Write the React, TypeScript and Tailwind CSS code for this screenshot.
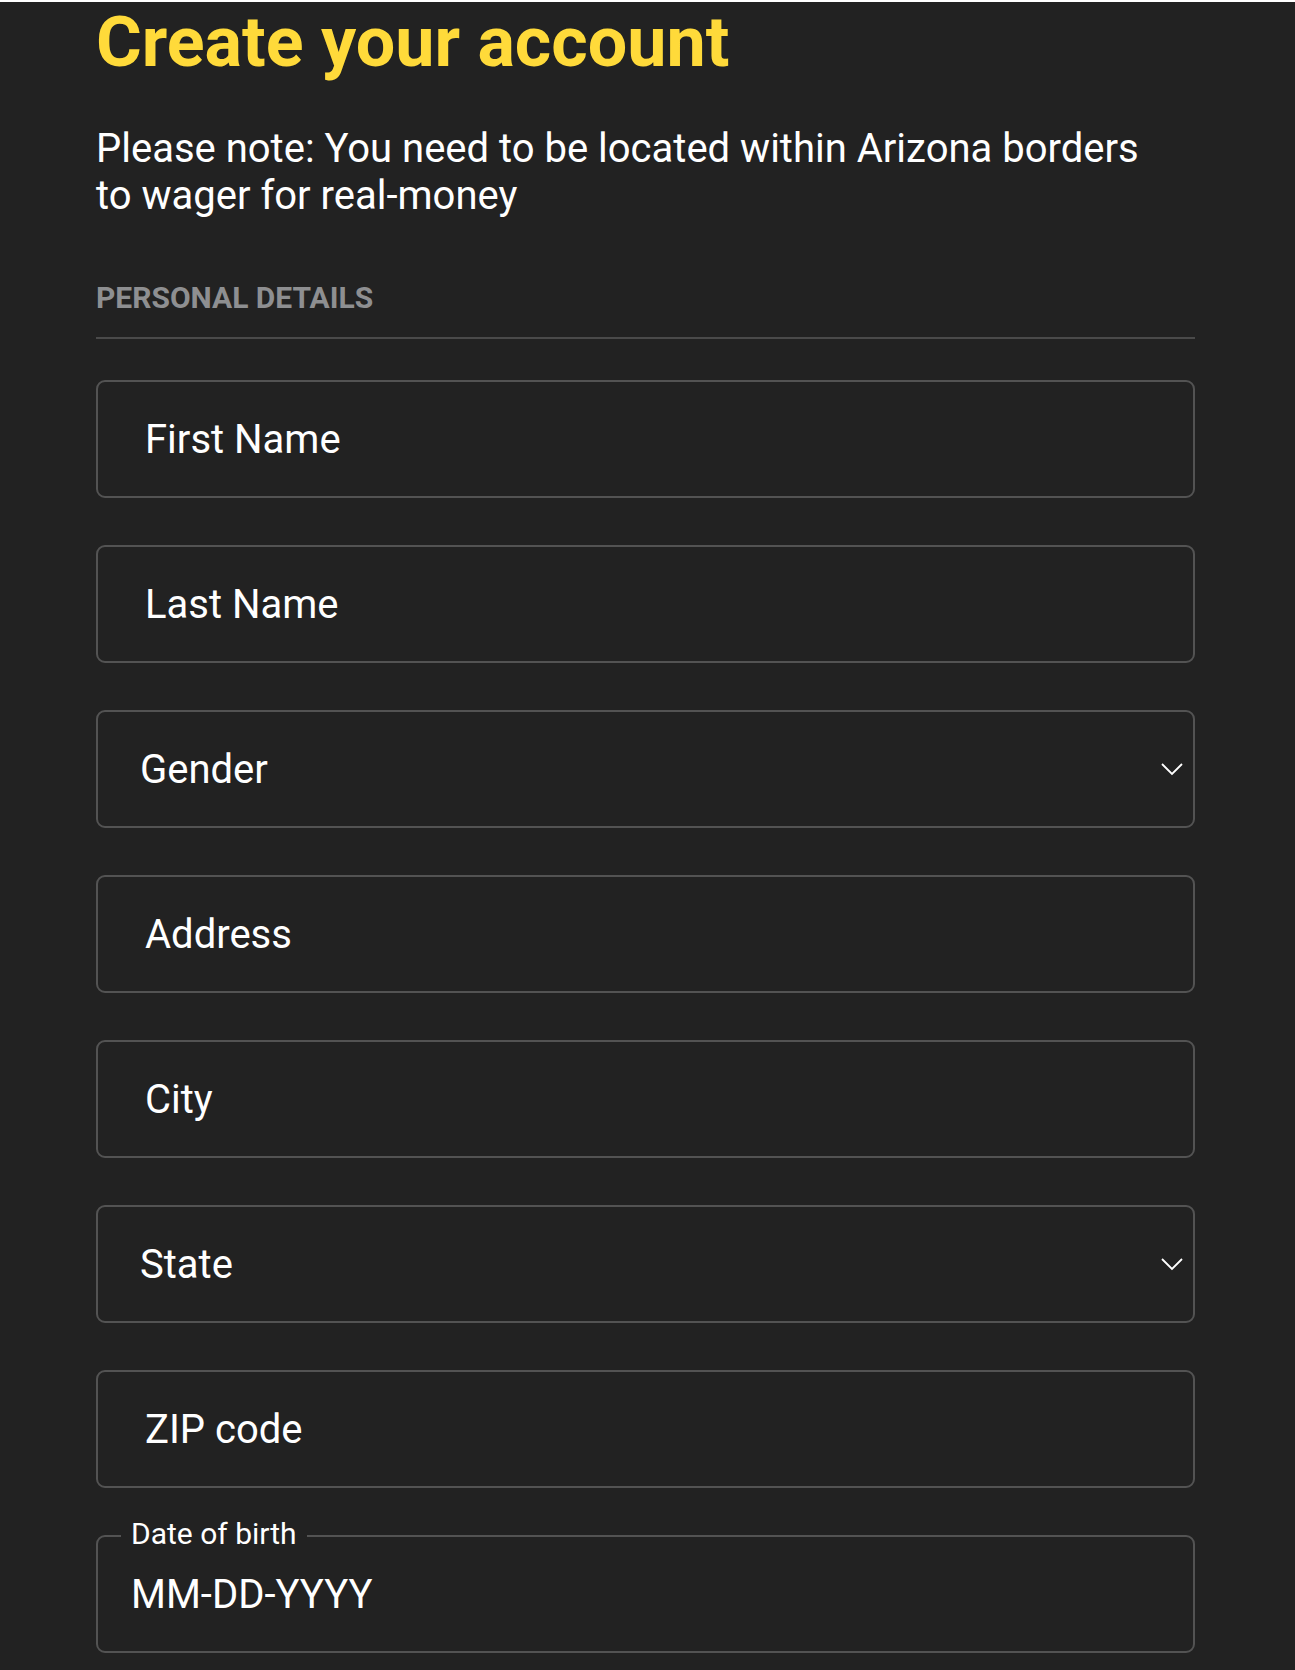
import React from "react";

function Field({ label }: { label: string }) {
  return (
    <div className="flex h-[118px] items-center rounded-[9px] border-2 border-[#535353] pl-[47px]">
      <span className="text-[40px] leading-[47px] text-white">{label}</span>
    </div>
  );
}

function SelectField({ label }: { label: string }) {
  return (
    <div className="flex h-[118px] items-center justify-between rounded-[9px] border-2 border-[#535353] pl-[42px] pr-[10px]">
      <span className="text-[40px] leading-[47px] text-white">{label}</span>
      <svg width="22" height="13" viewBox="0 0 22 13" fill="none">
        <polyline points="1,1 11,11 21,1" stroke="#ffffff" strokeWidth="1.8" fill="none" />
      </svg>
    </div>
  );
}

export default function App() {
  return (
    <div
      className="min-h-[1670px] w-full bg-[#222222] pb-[20px]"
      style={{ fontFamily: "Roboto, 'Liberation Sans', sans-serif" }}
    >
      <div className="ml-[96px] w-[1099px]">
        <h1 className="mt-[2px] text-[70px] font-bold leading-[80px] text-[#ffda3a]">
          Create your account
        </h1>
        <p className="mt-[43px] w-[1060px] text-[40px] leading-[47px] text-white">
          Please note: You need to be located within Arizona borders to wager for real-money
        </p>
        <div className="mt-[61px] text-[30px] font-bold uppercase leading-[35px] text-[#8e8f91]">
          Personal details
        </div>
        <div className="mt-[22px] h-[2px] bg-[#4a4a4a]" />
        <div className="mt-[41px] flex flex-col gap-[47px]">
          <Field label="First Name" />
          <Field label="Last Name" />
          <SelectField label="Gender" />
          <Field label="Address" />
          <Field label="City" />
          <SelectField label="State" />
          <Field label="ZIP code" />
          <div className="relative flex h-[118px] items-center rounded-[9px] border-2 border-[#535353] pl-[33px]">
            <span className="absolute left-[23px] top-[-21px] bg-[#222222] px-[10px] text-[30px] leading-[35px] text-white">
              Date of birth
            </span>
            <span className="text-[40px] leading-[47px] text-white">MM-DD-YYYY</span>
          </div>
        </div>
      </div>
    </div>
  );
}
